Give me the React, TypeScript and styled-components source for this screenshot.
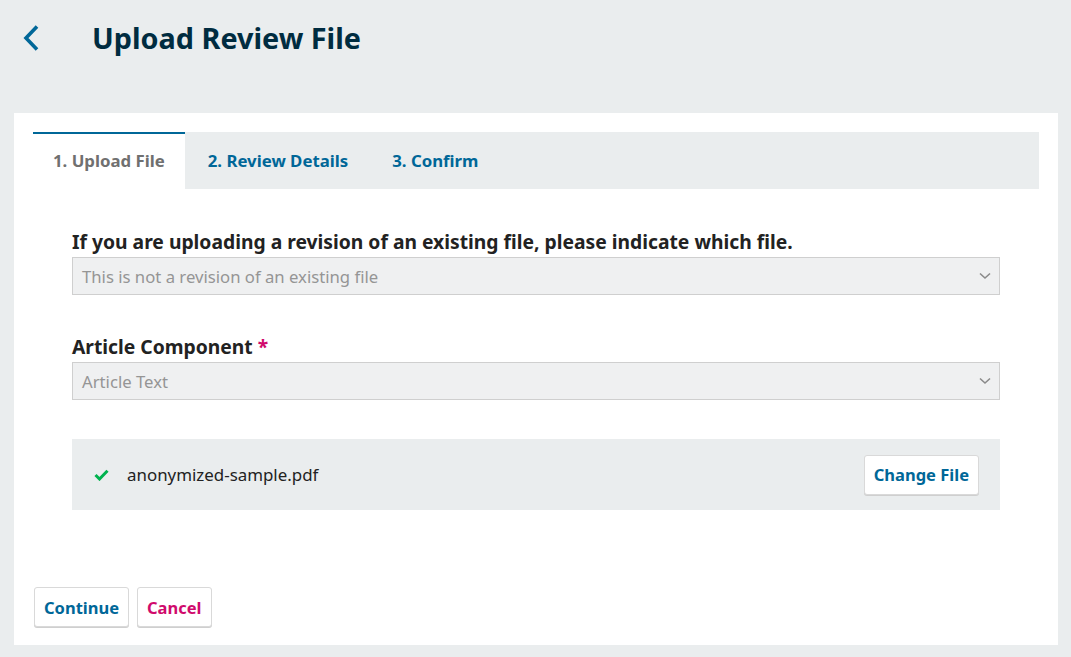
import * as React from "react";
import styled, { createGlobalStyle } from "styled-components";

const GlobalStyle = createGlobalStyle`
  html, body {
    margin: 0;
    padding: 0;
    background: #eaedee;
    font-family: "Noto Sans", "Open Sans", sans-serif;
  }
`;

const Page = styled.div`
  width: 1071px;
  height: 657px;
  background: #eaedee;
  box-sizing: border-box;
  padding: 0 13px 12px 14px;
`;

const Header = styled.header`
  height: 113px;
  display: flex;
  align-items: flex-start;
  padding: 18px 0 0 9px;
  box-sizing: border-box;
`;

const BackLink = styled.a`
  width: 16px;
  height: 40px;
  display: flex;
  align-items: center;
  color: #006798;
  margin-right: 53px;
`;

const Title = styled.h1`
  margin: 0;
  font-size: 28.8px;
  line-height: 40px;
  font-weight: 700;
  color: #002c40;
`;

const Panel = styled.section`
  background: #fff;
  padding: 19px 19px 18px;
`;

const TabList = styled.div`
  display: flex;
  background: #eaedee;
  height: 57px;
`;

const Tab = styled.button<{ $active?: boolean }>`
  border: none;
  border-top: 2px solid ${(p) => (p.$active ? "#006798" : "transparent")};
  background: ${(p) => (p.$active ? "#fff" : "transparent")};
  color: ${(p) => (p.$active ? "#707070" : "#006798")};
  font-family: inherit;
  font-size: 16.8px;
  font-weight: 700;
  padding: ${(p) => (p.$active ? "0 20px 2px 20px" : "0 21px 2px 23px")};
  cursor: pointer;
`;

const Form = styled.div`
  padding: 41px 39px 0;
  display: flex;
  flex-direction: column;
`;

const Field = styled.div`
  display: flex;
  flex-direction: column;
  margin-bottom: 40px;
`;

const Label = styled.label`
  font-size: 19.3px;
  font-weight: 700;
  color: #222;
  line-height: 24px;
  margin-bottom: 3px;
`;

const Required = styled.span`
  color: #d00a6c;
`;

const Select = styled.div`
  height: 38px;
  box-sizing: border-box;
  border: 1px solid #cfcfcf;
  background: #eff0f1;
  display: flex;
  align-items: center;
  justify-content: space-between;
  padding: 0 8px 0 9px;
  font-size: 16.7px;
  color: #959595;
`;

const Chevron = () => (
  <svg width="12" height="8" viewBox="0 0 12 8" fill="none">
    <path d="M1 1.5 L6 6 L11 1.5" stroke="#8a8a8a" strokeWidth="1.6" />
  </svg>
);

const FileBox = styled.div`
  height: 71px;
  background: #eaedee;
  display: flex;
  align-items: center;
  padding: 0 21px 0 22px;
  margin: -1px 0 77px;
`;

const FileName = styled.span`
  flex: 1;
  font-size: 16.9px;
  color: #222;
  margin-left: 18px;
`;

const Button = styled.button<{ $danger?: boolean }>`
  height: 40px;
  box-sizing: border-box;
  background: #fff;
  border: 1px solid #d9d9d9;
  border-radius: 3px;
  box-shadow: 0 1px 0 #cfcfcf;
  padding: 0 9px;
  font-family: inherit;
  font-size: 16.5px;
  font-weight: 700;
  color: ${(p) => (p.$danger ? "#d00a6c" : "#006798")};
  cursor: pointer;
`;

const Actions = styled.div`
  display: flex;
  gap: 8px;
  margin-left: 1px;
`;

export default function App() {
  return (
    <Page>
      <GlobalStyle />
      <Header>
        <BackLink>
          <svg width="16" height="26" viewBox="0 0 16 26" fill="none">
            <path d="M14 1.5 L3 13 L14 24.5" stroke="#006798" strokeWidth="3.6" />
          </svg>
        </BackLink>
        <Title>Upload Review File</Title>
      </Header>
      <Panel>
        <TabList>
          <Tab $active>1. Upload File</Tab>
          <Tab>2. Review Details</Tab>
          <Tab>3. Confirm</Tab>
        </TabList>
        <Form>
          <Field>
            <Label>If you are uploading a revision of an existing file, please indicate which file.</Label>
            <Select>
              This is not a revision of an existing file
              <Chevron />
            </Select>
          </Field>
          <Field>
            <Label>
              Article Component <Required>*</Required>
            </Label>
            <Select>
              Article Text
              <Chevron />
            </Select>
          </Field>
          <FileBox>
            <svg width="15" height="12" viewBox="0 0 15 12" fill="none">
              <path d="M1.5 6 L5.5 10 L13.5 1.8" stroke="#00b24e" strokeWidth="3" />
            </svg>
            <FileName>anonymized-sample.pdf</FileName>
            <Button>Change File</Button>
          </FileBox>
        </Form>
        <Actions>
          <Button>Continue</Button>
          <Button $danger>Cancel</Button>
        </Actions>
      </Panel>
    </Page>
  );
}
